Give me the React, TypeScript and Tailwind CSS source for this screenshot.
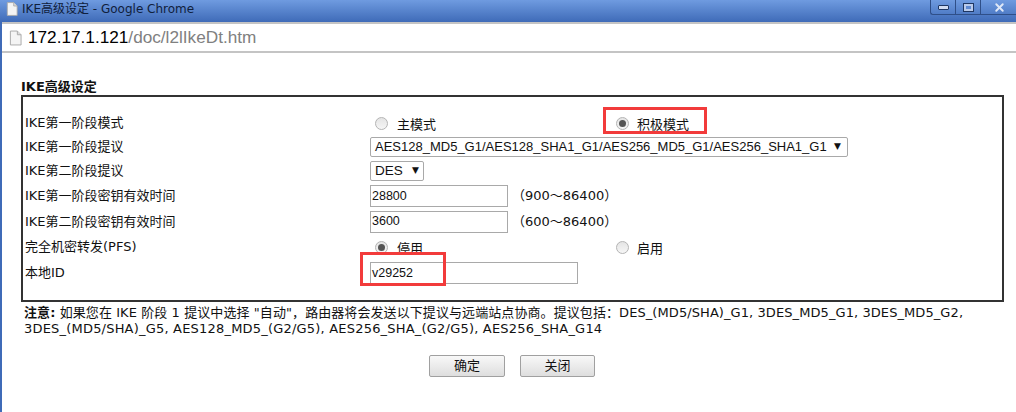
import { X } from 'lucide-react'

const font = "[font-family:'DejaVu_Sans','Noto_Sans_CJK_SC',sans-serif]"
const arial = "[font-family:'Liberation_Sans','Noto_Sans_CJK_SC',sans-serif]"

function PageIcon({ className }: { className: string }) {
  return (
    <svg viewBox="0 0 14 16" className={className}>
      <path d="M1.500 .5h7.500l4 4v11h-11.500z" fill="#f4f4f4" stroke="#a8a8a8" />
      <path d="M9 .5v4h4" fill="#dcdcdc" stroke="#a8a8a8" />
    </svg>
  )
}

function Radio({ checked }: { checked?: boolean }) {
  return (
    <span className="flex h-[13px] w-[13px] items-center justify-center rounded-full border border-[#b4b4b4] bg-gradient-to-b from-[#e4e4e4] to-[#f6f6f6]">
      {checked && <span className="h-[7px] w-[7px] rounded-full bg-[#555]" />}
    </span>
  )
}

function Row({ label, height, children }: { label: string; height: string; children: React.ReactNode }) {
  return (
    <div className={`flex items-center ${height}`}>
      <div className="w-[347px] shrink-0 pl-[2px]">{label}</div>
      {children}
    </div>
  )
}

function Field({ value, width }: { value: string; width: string }) {
  return (
    <div className={`flex h-[22px] items-center border border-[#a9a9a9] pl-[1px] text-[12.500px] ${arial} ${width}`}>
      {value}
    </div>
  )
}

export default function App() {
  return (
    <div className={`flex h-[412px] w-[1016px] flex-col overflow-hidden bg-white text-[13px] text-[#111] ${font}`}>
      {/* window title bar */}
      <div className="flex h-[22px] shrink-0 items-start justify-between bg-gradient-to-b from-[#6f9be0] to-[#3f6bb8]">
        <div className="flex items-center gap-[4px] pl-[6px] text-[12px] text-[#10203c]">
          <PageIcon className="h-[14px] w-[12px]" />
          <span>IKE高级设定 - Google Chrome</span>
        </div>
        <div className="flex h-[15px] items-center rounded-bl-[3px] border-b border-l border-[#2f4f88]">
          <div className="flex h-full w-[25px] items-center justify-center border-r border-[#2f4f88]">
            <span className="h-[5px] w-[11px] rounded-[1px] border border-[#1f3763] bg-[#d0dcf2]" />
          </div>
          <div className="flex h-full w-[25px] items-center justify-center border-r border-[#2f4f88]">
            <span className="flex h-[9px] w-[11px] items-center justify-center border border-[#1f3763] bg-[#b9cbec]">
              <span className="h-[3px] w-[5px] bg-[#5f8ad2]" />
            </span>
          </div>
          <div className="flex h-full w-[35px] items-center justify-center pl-[2px]">
            <X className="h-[13px] w-[13px] text-[#dfe8f7]" strokeWidth={3.5} />
          </div>
        </div>
      </div>

      <div className="flex min-h-0 flex-1 border-l-[2px] border-[#3f6bb8]">
        <div className="min-w-0 flex-1 bg-white">
          {/* address bar */}
          <div className={`flex h-[31px] items-center border-y-[2px] border-[#c4c4c4] pl-[7px] text-[17.200px] ${arial}`}>
            <PageIcon className="mr-[6px] h-[16px] w-[13px]" />
            <span className="text-black">172.17.1.121</span>
            <span className="text-[#808080]">/doc/l2lIkeDt.htm</span>
          </div>

          <div className="pl-[19px] pt-[26px]">
            <div className="h-[16px] font-bold leading-[16px]">IKE高级设定</div>

            {/* settings table */}
            <div className="relative h-[207px] w-[983px] border-[2px] border-[#333] pt-[14px]">
              <Row label="IKE第一阶段模式" height="h-[24px]">
                <div className="flex w-[246px] items-center pl-[5px]">
                  <Radio />
                  <span className="ml-[9px] mt-[3px]">主模式</span>
                </div>
                <Radio checked />
                <span className="ml-[8px] mt-[3px]">积极模式</span>
              </Row>
              <Row label="IKE第一阶段提议" height="h-[24px]">
                <div className="flex h-[20px] w-[478px] items-center justify-between rounded-[2px] border border-[#a9a9a9] pl-[4px] pr-[6px]">
                  <span className={`text-[13px] ${arial}`}>
                    AES128_MD5_G1/AES128_SHA1_G1/AES256_MD5_G1/AES256_SHA1_G1
                  </span>
                  <span className="text-[9px]">▼</span>
                </div>
              </Row>
              <Row label="IKE第二阶段提议" height="h-[24px]">
                <div className="flex h-[20px] w-[54px] items-center justify-between rounded-[2px] border border-[#a9a9a9] px-[4px]">
                  <span className={`text-[13.500px] ${arial}`}>DES</span>
                  <span className="text-[9px]">▼</span>
                </div>
              </Row>
              <Row label="IKE第一阶段密钥有效时间" height="h-[26px]">
                <Field value="28800" width="w-[138px]" />
                <span className="ml-[4px]">（900～86400）</span>
              </Row>
              <Row label="IKE第二阶段密钥有效时间" height="h-[25px]">
                <Field value="3600" width="w-[138px]" />
                <span className="ml-[4px]">（600～86400）</span>
              </Row>
              <Row label="完全机密转发(PFS)" height="h-[26px]">
                <div className="flex w-[246px] items-center pl-[5px]">
                  <Radio checked />
                  <span className="ml-[9px] mt-[3px]">停用</span>
                </div>
                <Radio />
                <span className="ml-[8px] mt-[3px]">启用</span>
              </Row>
              <Row label="本地ID" height="h-[26px]">
                <Field value="v29252" width="w-[208px]" />
              </Row>

              {/* annotation boxes drawn over the form */}
              <div className="absolute left-[580px] top-[10px] h-[27px] w-[104px] border-[3px] border-[#f23b3b]" />
              <div className="absolute left-[337px] top-[155px] h-[34px] w-[86px] border-[3px] border-[#f23b3b]" />
            </div>

            {/* note */}
            <div className="pl-[3px] pt-[3px] leading-[16px]">
              <div className="whitespace-nowrap tracking-[0.08px]">
                <b>注意:</b> 如果您在 IKE 阶段 1 提议中选择 "自动"，路由器将会发送以下提议与远端站点协商。提议包括：DES_(MD5/SHA)_G1, 3DES_MD5_G1, 3DES_MD5_G2,
              </div>
              <div className="whitespace-nowrap tracking-[0.2px]">
                3DES_(MD5/SHA)_G5, AES128_MD5_(G2/G5), AES256_SHA_(G2/G5), AES256_SHA_G14
              </div>
            </div>

            <div className="flex gap-[15px] pl-[408px] pt-[18px]">
              <button className="h-[22px] w-[76px] rounded-[2px] border border-[#a0a0a0] bg-gradient-to-b from-[#f8f8f8] to-[#dedede] text-[#111]">
                确定
              </button>
              <button className="h-[22px] w-[75px] rounded-[2px] border border-[#a0a0a0] bg-gradient-to-b from-[#f8f8f8] to-[#dedede] text-[#111]">
                关闭
              </button>
            </div>
          </div>
        </div>
      </div>
    </div>
  )
}
